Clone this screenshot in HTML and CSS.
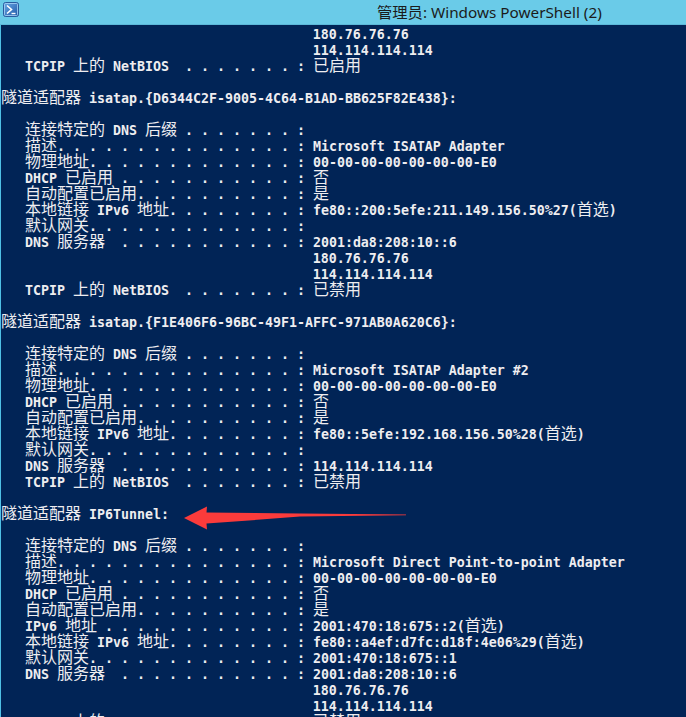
FILE: index.html
```html
<!DOCTYPE html>
<html lang="zh-CN">
<head>
<meta charset="utf-8">
<title>管理员: Windows PowerShell (2)</title>
<link rel="stylesheet" href="styles.css">
</head>
<body>
<div class="window">
  <div class="titlebar">
    <svg class="ps-icon" width="16" height="15" viewBox="0 0 16 15">
      <defs>
        <linearGradient id="psg" x1="0" y1="0" x2="1" y2="1">
          <stop offset="0" stop-color="#6aaae6"/>
          <stop offset="1" stop-color="#1f57a6"/>
        </linearGradient>
      </defs>
      <rect x="0.5" y="0.5" width="15" height="14" rx="2" fill="url(#psg)" stroke="#2a5c9e"/>
      <rect x="1.5" y="1.5" width="13" height="12" rx="1" fill="none" stroke="#a9d3f5" stroke-width="0.8"/>
      <path d="M4 3.5 L8.5 7.5 L4 11.5" fill="none" stroke="#ffffff" stroke-width="1.6"/>
      <path d="M8.5 11.5 H12.5" stroke="#ffffff" stroke-width="1.4"/>
    </svg>
    <div class="title">管理员: Windows PowerShell (2)</div>
  </div>
  <div class="console">
    <div class="ln">                                       180.76.76.76</div>
    <div class="ln">                                       114.114.114.114</div>
    <div class="ln">   TCPIP <span class="c">上的</span> NetBIOS  . . . . . . . : <span class="c">已启用</span></div>
    <div class="ln"></div>
    <div class="ln"><span class="c">隧道适配器</span> isatap.{D6344C2F-9005-4C64-B1AD-BB625F82E438}:</div>
    <div class="ln"></div>
    <div class="ln">   <span class="c">连接特定的</span> DNS <span class="c">后缀</span> . . . . . . . :</div>
    <div class="ln">   <span class="c">描述</span>. . . . . . . . . . . . . . . : Microsoft ISATAP Adapter</div>
    <div class="ln">   <span class="c">物理地址</span>. . . . . . . . . . . . . : 00-00-00-00-00-00-00-E0</div>
    <div class="ln">   DHCP <span class="c">已启用</span> . . . . . . . . . . . : <span class="c">否</span></div>
    <div class="ln">   <span class="c">自动配置已启用</span>. . . . . . . . . . : <span class="c">是</span></div>
    <div class="ln">   <span class="c">本地链接</span> IPv6 <span class="c">地址</span>. . . . . . . . : fe80::200:5efe:211.149.156.50%27(<span class="c">首选</span>)</div>
    <div class="ln">   <span class="c">默认网关</span>. . . . . . . . . . . . . :</div>
    <div class="ln">   DNS <span class="c">服务器</span>  . . . . . . . . . . . : 2001:da8:208:10::6</div>
    <div class="ln">                                       180.76.76.76</div>
    <div class="ln">                                       114.114.114.114</div>
    <div class="ln">   TCPIP <span class="c">上的</span> NetBIOS  . . . . . . . : <span class="c">已禁用</span></div>
    <div class="ln"></div>
    <div class="ln"><span class="c">隧道适配器</span> isatap.{F1E406F6-96BC-49F1-AFFC-971AB0A620C6}:</div>
    <div class="ln"></div>
    <div class="ln">   <span class="c">连接特定的</span> DNS <span class="c">后缀</span> . . . . . . . :</div>
    <div class="ln">   <span class="c">描述</span>. . . . . . . . . . . . . . . : Microsoft ISATAP Adapter #2</div>
    <div class="ln">   <span class="c">物理地址</span>. . . . . . . . . . . . . : 00-00-00-00-00-00-00-E0</div>
    <div class="ln">   DHCP <span class="c">已启用</span> . . . . . . . . . . . : <span class="c">否</span></div>
    <div class="ln">   <span class="c">自动配置已启用</span>. . . . . . . . . . : <span class="c">是</span></div>
    <div class="ln">   <span class="c">本地链接</span> IPv6 <span class="c">地址</span>. . . . . . . . : fe80::5efe:192.168.156.50%28(<span class="c">首选</span>)</div>
    <div class="ln">   <span class="c">默认网关</span>. . . . . . . . . . . . . :</div>
    <div class="ln">   DNS <span class="c">服务器</span>  . . . . . . . . . . . : 114.114.114.114</div>
    <div class="ln">   TCPIP <span class="c">上的</span> NetBIOS  . . . . . . . : <span class="c">已禁用</span></div>
    <div class="ln"></div>
    <div class="ln"><span class="c">隧道适配器</span> IP6Tunnel:</div>
    <div class="ln"></div>
    <div class="ln">   <span class="c">连接特定的</span> DNS <span class="c">后缀</span> . . . . . . . :</div>
    <div class="ln">   <span class="c">描述</span>. . . . . . . . . . . . . . . : Microsoft Direct Point-to-point Adapter</div>
    <div class="ln">   <span class="c">物理地址</span>. . . . . . . . . . . . . : 00-00-00-00-00-00-00-E0</div>
    <div class="ln">   DHCP <span class="c">已启用</span> . . . . . . . . . . . : <span class="c">否</span></div>
    <div class="ln">   <span class="c">自动配置已启用</span>. . . . . . . . . . : <span class="c">是</span></div>
    <div class="ln">   IPv6 <span class="c">地址</span> . . . . . . . . . . . . : 2001:470:18:675::2(<span class="c">首选</span>)</div>
    <div class="ln">   <span class="c">本地链接</span> IPv6 <span class="c">地址</span>. . . . . . . . : fe80::a4ef:d7fc:d18f:4e06%29(<span class="c">首选</span>)</div>
    <div class="ln">   <span class="c">默认网关</span>. . . . . . . . . . . . . : 2001:470:18:675::1</div>
    <div class="ln">   DNS <span class="c">服务器</span>  . . . . . . . . . . . : 2001:da8:208:10::6</div>
    <div class="ln">                                       180.76.76.76</div>
    <div class="ln">                                       114.114.114.114</div>
    <div class="ln">   TCPIP <span class="c">上的</span> NetBIOS  . . . . . . . : <span class="c">已禁用</span></div>
  </div>
  <svg class="arrow" width="686" height="717" viewBox="0 0 686 717">
    <polygon points="184,518 207,506.5 206.5,512.4 300,513.4 406,514.6 406,515.3 300,516.6 206.5,523.6 207,529.5" fill="#fb3b3b"/>
  </svg>
</div>
</body>
</html>
```

FILE: styles.css
```css
html, body {
  margin: 0;
  padding: 0;
  background: #012456;
}

.window {
  position: relative;
  width: 686px;
  height: 717px;
  overflow: hidden;
  display: flex;
  flex-direction: column;
  background: #012456;
}

.titlebar {
  flex: 0 0 auto;
  height: 24px;
  border-bottom: 1px solid #5cb9d9;
  background: #6acbe8;
  display: flex;
  align-items: flex-start;
}

.ps-icon {
  display: block;
  margin: 2px 0 0 3px;
}

.title {
  margin-left: 358px;
  font-family: "Noto Sans", "Noto Sans CJK SC", sans-serif;
  font-size: 15.3px;
  line-height: 24px;
  color: #1b1b1b;
  white-space: nowrap;
}

.console {
  flex: 1 1 auto;
  border-left: 1px solid #4fc1e6;
  padding-top: 2px;
  background: #012456;
  color: #eeedf0;
  font-family: "DejaVu Sans Mono", "Liberation Mono", monospace;
  font-weight: bold;
  font-size: 13.29px;
  line-height: 16px;
}

.ln {
  height: 16px;
  white-space: pre;
}

.c {
  font-family: "Noto Sans CJK SC", "Noto Sans", sans-serif;
  font-weight: normal;
  font-size: 16px;
  line-height: 0;
}

.arrow {
  position: absolute;
  left: 0;
  top: 0;
  pointer-events: none;
}
```
